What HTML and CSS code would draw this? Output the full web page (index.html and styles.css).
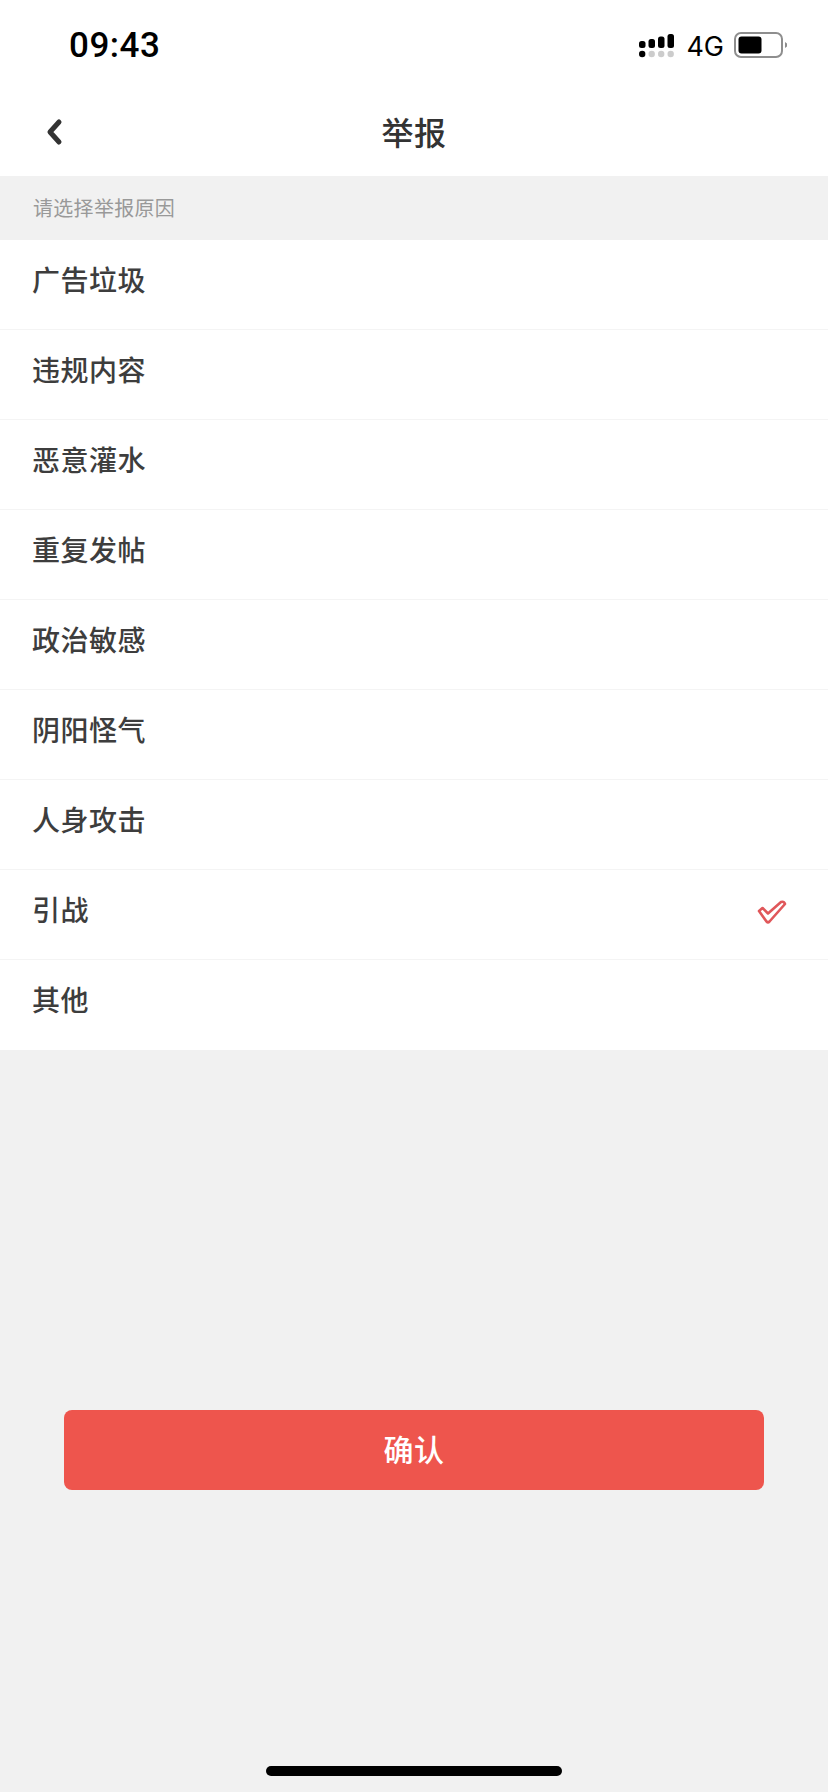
FILE: index.html
```html
<!DOCTYPE html>
<html lang="zh">
<head>
<meta charset="utf-8">
<title>举报</title>
<link rel="stylesheet" href="styles.css">
</head>
<body>
<div class="page">
  <div class="status">
    <span class="time">09:43</span>
    <div class="status-right">
      <svg class="signal" width="36" height="26" viewBox="0 0 36 26">
        <rect x="0" y="8" width="6.500" height="7" rx="2.500" fill="#000"/>
        <rect x="9.500" y="6" width="6.500" height="9" rx="2.500" fill="#000"/>
        <rect x="19" y="3.500" width="6.500" height="11.500" rx="2.500" fill="#000"/>
        <rect x="28.500" y="1" width="6.500" height="14" rx="2.500" fill="#000"/>
        <circle cx="3.200" cy="21" r="3.200" fill="#000"/>
        <circle cx="12.700" cy="21" r="3.200" fill="#ccc"/>
        <circle cx="22.200" cy="21" r="3.200" fill="#ccc"/>
        <circle cx="31.700" cy="21" r="3.200" fill="#ccc"/>
      </svg>
      <span class="net">4G</span>
      <svg class="battery" width="54" height="26" viewBox="0 0 54 26">
        <rect x="1" y="1" width="47" height="24" rx="6" fill="none" stroke="#8e8e8e" stroke-width="2"/>
        <rect x="4.500" y="4.500" width="23" height="17" rx="3" fill="#000"/>
        <path d="M51 10 L53 11.500 V14.500 L51 16 Z" fill="#8e8e8e"/>
      </svg>
    </div>
  </div>
  <header class="nav">
    <svg class="back" width="20" height="28" viewBox="0 0 20 28">
      <path d="M15 4 L6 14 L15 24" fill="none" stroke="#333" stroke-width="5" stroke-linecap="round" stroke-linejoin="round"/>
    </svg>
    <h1 class="title">举报</h1>
  </header>
  <div class="hint">请选择举报原因</div>
  <ul class="list">
    <li class="row">广告垃圾</li>
    <li class="row">违规内容</li>
    <li class="row">恶意灌水</li>
    <li class="row">重复发帖</li>
    <li class="row">政治敏感</li>
    <li class="row">阴阳怪气</li>
    <li class="row">人身攻击</li>
    <li class="row">引战
      <svg class="check" width="30" height="26" viewBox="0 0 30 26">
        <path d="M2 11 L5.500 8 L11 13.500 L24 2 Q27 1 28 4 L12.500 21.500 Q11 23 9.500 21.500 Z" fill="none" stroke="#e0575a" stroke-width="2.600" stroke-linejoin="round"/>
      </svg>
    </li>
    <li class="row">其他</li>
  </ul>
  <div class="footer">
    <button class="confirm" type="button">确认</button>
  </div>
  <div class="home-bar"></div>
</div>
</body>
</html>
```

FILE: styles.css
```css
* { box-sizing: border-box; }
html, body { margin: 0; padding: 0; }
body {
  background: #f1f1f1;
  font-family: "Noto Sans CJK SC", "Liberation Sans", sans-serif;
}
.page {
  position: relative;
  width: 828px;
  height: 1792px;
  display: flex;
  flex-direction: column;
  overflow: hidden;
}
.status {
  height: 88px;
  background: #fff;
  display: flex;
  align-items: center;
  justify-content: space-between;
  padding: 0 40px 0 69px;
}
.time {
  margin-top: 2px;
  font-family: Roboto, "Liberation Sans", sans-serif;
  font-size: 35px;
  font-weight: 500;
  letter-spacing: 0.5px;
  color: #000;
}
.status-right { display: flex; align-items: center; }
.signal { margin-right: 11px; position: relative; top: 2px; }
.net {
  font-family: Inter, "Liberation Sans", sans-serif;
  font-size: 27px;
  color: #000;
  margin-right: 10px;
  position: relative;
  top: 2px;
}
.battery { position: relative; top: 1px; }
.nav {
  height: 88px;
  background: #fff;
  display: flex;
  align-items: center;
  justify-content: center;
  position: relative;
}
.back { position: absolute; left: 44px; top: 30px; }
.title {
  margin: 0 0 3px;
  font-size: 32px;
  font-weight: 500;
  color: #333;
  letter-spacing: 0.5px;
}
.hint {
  height: 64px;
  padding: 0 0 2px 33px;
  display: flex;
  align-items: center;
  font-size: 20px;
  color: #999;
  letter-spacing: 0.3px;
}
.list { margin: 0; padding: 0; list-style: none; background: #fff; }
.row {
  height: 90px;
  padding: 0 42px 12px 32px;
  display: flex;
  align-items: center;
  justify-content: space-between;
  font-size: 28px;
  font-weight: 500;
  color: #3d3d3d;
  letter-spacing: 0.5px;
  border-bottom: 1px solid #f4f4f4;
}
.row:last-child { border-bottom: 0; }
.check { margin: 8px -1px 0 0; }
.footer { padding: 360px 64px 0; }
.confirm {
  display: block;
  width: 700px;
  height: 80px;
  padding: 0 0 4px;
  border: 0;
  border-radius: 8px;
  background: #ee554d;
  color: #fff;
  font: 500 30px "Noto Sans CJK SC", sans-serif;
  letter-spacing: 0.5px;
}
.home-bar {
  position: absolute;
  left: 266px;
  top: 1766px;
  width: 296px;
  height: 10px;
  border-radius: 5px;
  background: #000;
}
```
